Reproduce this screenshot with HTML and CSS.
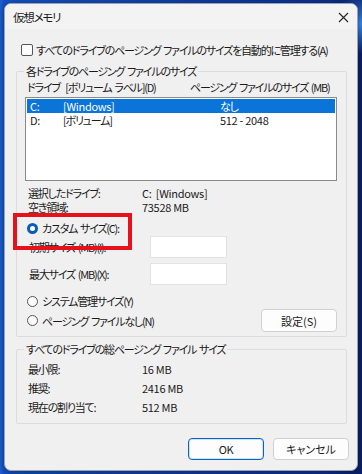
FILE: index.html
```html
<!DOCTYPE html>
<html lang="ja">
<head>
  <meta charset="UTF-8">
  <title>仮想メモリ</title>
  <link rel="stylesheet" href="styles.css">
</head>
<body>

<div class="window">
  <div class="titlebar">
    <span class="title">仮想メモリ</span>
    <span class="close">
      <svg width="11" height="11" viewBox="0 0 11 11"><path d="M1 1 L10 10 M10 1 L1 10" stroke="#222" stroke-width="1.1" fill="none"/></svg>
    </span>
  </div>

  <div class="content">
    <label class="check-row"><span class="checkbox"></span>すべてのドライブのページング ファイルのサイズを自動的に管理する(A)</label>

    <fieldset class="group group-drives">
      <legend>各ドライブのページング ファイルのサイズ</legend>
      <div class="list-head">
        <span class="head-drive">ドライブ &nbsp;[ボリューム ラベル](D)</span>
        <span class="head-size">ページング ファイルのサイズ (MB)</span>
      </div>
      <div class="listbox">
        <div class="list-row selected"><span class="c1 num">C:</span><span class="c2 num">[Windows]</span><span class="c3">なし</span></div>
        <div class="list-row"><span class="c1 num">D:</span><span class="c2">[ボリューム]</span><span class="c3 num">512 - 2048</span></div>
      </div>

      <div class="info first"><span class="info-label">選択したドライブ:</span><span class="num">C: &nbsp;[Windows]</span></div>
      <div class="info"><span class="info-label">空き領域:</span><span class="num">73528 MB</span></div>

      <div class="radio-row custom">
        <span class="highlight"><span class="radio on"></span>カスタム サイズ(C):</span>
      </div>
      <div class="size-row first-size"><span class="size-label">初期サイズ (MB)(I):</span><span class="textbox"></span></div>
      <div class="size-row"><span class="size-label">最大サイズ (MB)(X):</span><span class="textbox"></span></div>
      <div class="radio-row system"><span class="radio"></span>システム管理サイズ(Y)</div>
      <div class="radio-row none">
        <span class="radio-label"><span class="radio"></span>ページング ファイルなし(N)</span>
        <button class="btn btn-set">設定(S)</button>
      </div>
    </fieldset>

    <fieldset class="group group-total">
      <legend>すべてのドライブの総ページング ファイル サイズ</legend>
      <div class="total-row"><span class="info-label">最小限:</span><span class="num">16 MB</span></div>
      <div class="total-row"><span class="info-label">推奨:</span><span class="num">2416 MB</span></div>
      <div class="total-row"><span class="info-label">現在の割り当て:</span><span class="num">512 MB</span></div>
    </fieldset>

    <div class="buttons">
      <button class="btn btn-default num">OK</button>
      <button class="btn">キャンセル</button>
    </div>
  </div>
</div>

</body>
</html>
```

FILE: styles.css
```css
* {
  box-sizing: border-box;
}
body {
  margin: 0;
  width: 362px;
  height: 474px;
  overflow: hidden;
  padding: 3px 0 0 4px;
  font-family: "Noto Sans CJK JP", "Noto Sans", sans-serif;
  font-feature-settings: "palt";
  font-size: 11px;
  letter-spacing: -1.2px;
  word-spacing: 1.5px;
  color: #1a1a1a;
  background:
    radial-gradient(circle at 100% 5%, #3b8cf0 0, rgba(59,140,240,0) 30px),
    linear-gradient(90deg, #1d62d4 0, #1450c0 4px, #0c2f8c 330px, #0a1f66 100%);
}
.num {
  letter-spacing: -0.3px;
  word-spacing: 0;
}
.window {
  width: 354px;
  height: 468px;
  background: #f0f0f0;
  border: 1px solid #9aa3b0;
  border-radius: 7px;
  box-shadow: 0 2px 8px rgba(0, 0, 0, 0.35);
  overflow: hidden;
}
.titlebar {
  height: 25px;
  display: flex;
  align-items: center;
  justify-content: space-between;
  padding: 0 8px 0 8px;
  background: #f3f3f3;
}
.title {
  font-size: 11.5px;
}
.close {
  display: flex;
  margin-top: 1px;
}
.content {
  padding: 0 10px 0 11px;
}
.check-row {
  display: flex;
  align-items: center;
  height: 14px;
  margin-top: 14px;
  padding-left: 5px;
}
.checkbox {
  width: 12px;
  height: 12px;
  border: 1px solid #555;
  border-radius: 2px;
  background: #fdfdfd;
  margin-right: 3px;
}
.group {
  margin: 7px 0 0 0;
  padding: 2px 8px 4px 8px;
  border: 1px solid #dcdcdc;
  border-radius: 2px;
  min-width: 0;
}
.group legend {
  padding: 0 2px;
  margin-left: -1px;
  line-height: 14px;
}
.list-head {
  display: flex;
  height: 14px;
  line-height: 14px;
  padding-left: 2px;
  white-space: nowrap;
}
.head-drive {
  width: 163px;
}
.listbox {
  margin-top: 3px;
  height: 84px;
  margin-right: 1px;
  border: 1px solid #8a8a8a;
  background: #fff;
  padding: 1px 1px;
}
.list-row {
  display: flex;
  height: 14px;
  line-height: 14px;
  padding-left: 3px;
}
.list-row.selected {
  background: #0a74d8;
  color: #fff;
}
.c1 {
  width: 33px;
}
.c2 {
  width: 157px;
}
.info, .total-row {
  display: flex;
  height: 14px;
  line-height: 14px;
  padding-left: 3px;
}
.info.first {
  margin-top: 5px;
}
.info-label {
  width: 114px;
}
.radio-row {
  display: flex;
  align-items: center;
  height: 14px;
  padding-left: 2px;
}
.radio-row.custom {
  margin-top: 7px;
}
.highlight {
  position: relative;
  display: flex;
  align-items: center;
}
.highlight::after {
  content: "";
  position: absolute;
  left: -14px;
  top: -7px;
  width: 111px;
  height: 29px;
  border: 4px solid #e5121c;
}
.radio {
  width: 11px;
  height: 11px;
  border: 1px solid #555;
  border-radius: 50%;
  background: #fbfbfb;
  margin-right: 4px;
  flex: none;
}
.radio.on {
  border: 3px solid #0a5cb8;
  background: #fff;
}
.size-row {
  display: flex;
  align-items: center;
  height: 22px;
  margin-top: 5px;
  padding-left: 4px;
}
.size-row.first-size {
  margin-top: 1px;
}
.size-label {
  width: 121px;
}
.textbox {
  width: 77px;
  height: 22px;
  background: #fff;
  border: 1px solid #e2e2e2;
}
.radio-row.system {
  margin-top: 9px;
}
.radio-row.none {
  height: 23px;
  margin-top: 1px;
  justify-content: space-between;
}
.radio-label {
  display: flex;
  align-items: center;
}
.btn {
  width: 76px;
  height: 22px;
  font: inherit;
  color: #1a1a1a;
  background: #fdfdfd;
  border: 1px solid #d0d0d0;
  border-radius: 4px;
  padding: 0;
}
.btn-set {
  height: 23px;
  margin-right: 1px;
}
.btn-default {
  border: 1px solid #0a64c8;
  box-shadow: inset 0 0 0 1px #cfe3f7;
}
.group-total {
  margin-top: 5px;
  padding: 4px 8px 6px 8px;
}
.total-row {
  height: 19px;
  line-height: 19px;
}
.buttons {
  display: flex;
  justify-content: flex-end;
  gap: 9px;
  margin-top: 14px;
  margin-right: -2px;
}
```
